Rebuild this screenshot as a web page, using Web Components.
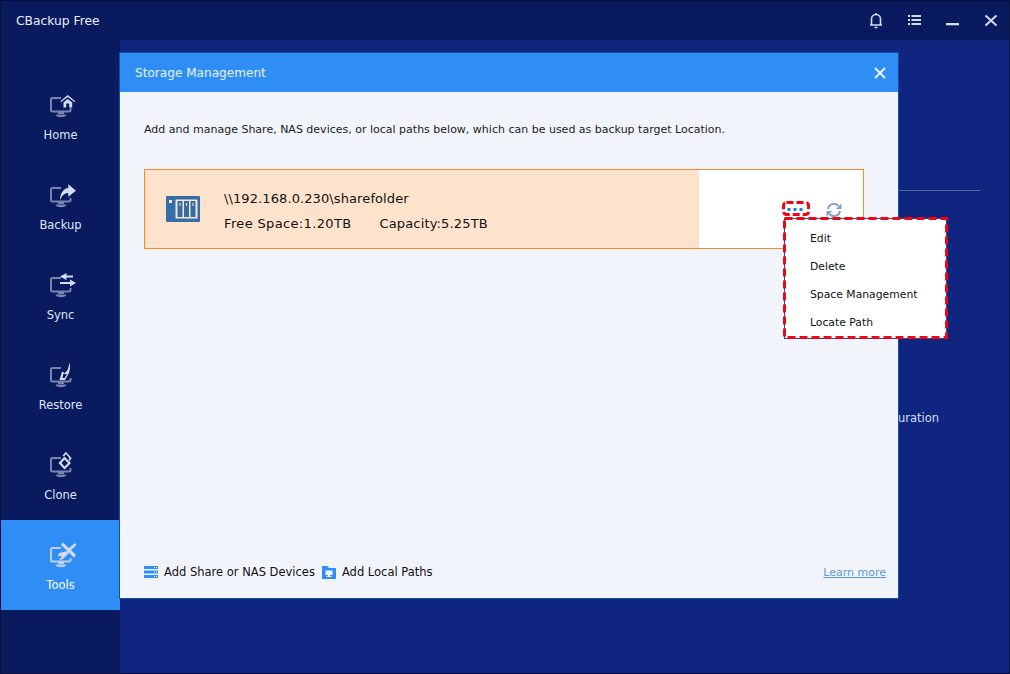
<!DOCTYPE html>
<html><head><meta charset="utf-8"><style>
html,body{margin:0;padding:0;background:#0a1a5e}
body{width:1010px;height:674px;overflow:hidden;font-family:"DejaVu Sans","Noto Sans",sans-serif;font-size:12px}
</style></head><body>
<cb-app></cb-app>
<script>
const monitor=`<g style="opacity:var(--mo,.55)"><path d="M12 7H3A1.500 1.500 0 0 0 2 8.500V19a1.500 1.500 0 0 0 1.500 1.500H20A1.500 1.500 0 0 0 21.500 19V17" fill="none" stroke="currentColor" stroke-width="2"/><path d="M9 21h6v2H9zM6.500 23.500h11a5 2.500 0 0 1-11 0z" fill="currentColor"/></g>`;
const glyphs={
home:`<path d="M18.700 4L26 10v1.500L18.700 6l-7 5.500V10zM14.500 11.500l4.200-3.500 4.500 3.500v5h-3v-4h-3v4h-2.700z" fill="currentColor"/>`,
backup:`<path d="M11 19C11 12 15 7 19.300 7V3.300L27 9.700l-7.700 6V12C15 12 13 15 11 19z" fill="currentColor"/>`,
sync:`<path d="M11 5.500L17.500 2v2.500H24v2h-6.500V9zM27 12l-6-3.500V11H11v2h10v2.500z" fill="currentColor"/>`,
restore:`<path d="M20.500 1.500C21.500 6 21 10 19.500 13L16 19h-5.500L13 10.500l3 1.500 2.500-3C19.500 7 20 4 20.500 1.500zM13.500 17h2l2.500-3.500-3.500-1z" fill="currentColor" fill-rule="evenodd"/>`,
clone:`<path d="M15.500 5.500L22 12l-6.500 6.500L9.500 12zM15.500 8.500L12.500 12l3 3.500L19 12z" fill="currentColor" fill-rule="evenodd"/><path d="M13.500 4.500L17 .7l5.700 6.600-2.200 2.700-1-1 1-1.700L17 3l-2 2.500z" fill="currentColor"/>`,
tools:`<path d="M12 4l2-2.500L27 14l-2 2.500zM26 2l1.500 2-6 5.500-2-2zM18 10l2 2-5 5a3.500 3.500 0 0 1-5 1l2.500-1.500-1-2-2.500 1a3.500 3.500 0 0 1 4-4z" fill="currentColor"/>`
};
function icon(n){return `<svg width="30" height="28" viewBox="0 0 30 28" style="color:#d4dcf2;display:block">${monitor}${glyphs[n]}</svg>`}
function shadow(el,html){el.attachShadow({mode:"open"}).innerHTML=html}

class CbNav extends HTMLElement{connectedCallback(){
 const n=this.getAttribute("icon");
 shadow(this,`<style>:host{display:flex;flex-direction:column;align-items:center;height:90px;box-sizing:border-box;padding-top:21px;color:#dfe6f8;font-size:11.500px}
 :host([active]){background:#2f8ef5;color:#fff;--mo:.85}
 .l{margin-top:8px;line-height:17px}
 svg{margin-left:7px}</style>${icon(n)}<div class="l"><slot></slot></div>`);
}}
customElements.define("cb-nav",CbNav);

class CbTitle extends HTMLElement{connectedCallback(){
 shadow(this,`<style>:host{display:flex;align-items:center;height:39px;background:#0a1a5e;color:#e8edfa;padding-left:15px;font-size:12.300px}
 .sp{flex:1}.b{display:flex;align-items:center}svg{display:block}</style>
 <span>CBackup Free</span><div class="sp"></div>
 <div class="b">
 <svg width="38" height="39" viewBox="0 0 38 39"><path d="M19 12v2M14.500 23.500V18a4.500 4.500 0 0 1 9 0v5.500M13 24h12M17.500 26.500h3" fill="none" stroke="#d4dcf2" stroke-width="1.600"/></svg>
 <svg width="38" height="39" viewBox="0 0 38 39"><path d="M13 14h2v2h-2zM13 18h2v2h-2zM13 22h2v2h-2zM16.500 14H26v2h-9.500zM16.500 18H26v2h-9.500zM16.500 22H26v2h-9.500z" fill="#d4dcf2"/></svg>
 <svg width="38" height="39" viewBox="0 0 38 39"><path d="M13 22h13v2.300H13z" fill="#d4dcf2"/></svg>
 <svg width="38" height="39" viewBox="0 0 38 39"><path d="M14.500 14.500l11 10M25.500 14.500l-11 10" stroke="#d4dcf2" stroke-width="2" fill="none"/></svg>
 </div>`);
}}
customElements.define("cb-title",CbTitle);

class CbMenu extends HTMLElement{connectedCallback(){
 shadow(this,`<style>:host{position:absolute;left:664px;top:126px;width:163px;height:121px;box-sizing:border-box;background:#fff;border:1px solid #22508f;display:block;padding:6px 0 0 25px;color:#111;font-size:10.800px;z-index:2}
 .m{height:28px;line-height:28px}
 svg{position:absolute;left:-2px;top:-2px}</style>
 <svg width="165" height="122"><rect x="1.500" y="1.500" width="162" height="119" fill="none" stroke="#f00514" stroke-width="3" stroke-dasharray="8 4"/></svg>
 <div class="m">Edit</div><div class="m">Delete</div><div class="m">Space Management</div><div class="m">Locate Path</div>`);
}}
customElements.define("cb-menu",CbMenu);

class CbStorage extends HTMLElement{connectedCallback(){
 shadow(this,`<style>:host{display:flex;height:80px;box-sizing:border-box;border:1px solid #fb8a2a;background:#fff;position:relative;color:#111}
 .f{width:554px;background:#fee3cc;display:flex;align-items:center;box-sizing:border-box;padding-left:21px}
 .t{margin-left:24px;font-size:13px;line-height:25px;padding-top:4px}
 .p{letter-spacing:.1px}
 .s1{letter-spacing:.35px}
 .s2{letter-spacing:.15px;margin-left:28px}
 .a{position:absolute;left:637px;top:31px;display:flex;align-items:flex-start}
 svg{display:block}</style>
 <div class="f">
 <svg width="34" height="26" viewBox="0 0 34 26"><rect width="34" height="26" rx="1" fill="#346ea8"/><rect x="9.500" y="3.500" width="22" height="19" fill="#fee3cc"/><rect x="11.500" y="5" width="5" height="16" fill="#346ea8"/><rect x="18" y="5" width="5" height="16" fill="#346ea8"/><rect x="24.500" y="5" width="5" height="16" fill="#346ea8"/><rect x="13.500" y="7" width="1" height="3" fill="#fee3cc"/><rect x="20" y="7" width="1" height="3" fill="#fee3cc"/><rect x="26.500" y="7" width="1" height="3" fill="#fee3cc"/><rect x="3" y="4" width="3" height="3" fill="#fee3cc"/></svg>
 <div class="t"><div class="p">\\\\192.168.0.230\\sharefolder</div><div><span class="s1">Free Space:1.20TB</span><span class="s2">Capacity:5.25TB</span></div></div>
 </div>
 <div class="a">
 <svg width="28" height="15" viewBox="0 0 28 15" style="margin-right:16px"><rect x="1.500" y="1.500" width="25" height="12" rx="3" fill="none" stroke="#f00514" stroke-width="3" stroke-dasharray="7 3"/><rect x="5.500" y="7" width="3" height="3" fill="#1f78e8"/><rect x="11.500" y="7" width="3" height="3" fill="#1f78e8"/><rect x="17.500" y="7" width="3" height="3" fill="#1f78e8"/></svg>
 <svg width="16" height="16" viewBox="0 0 16 16" style="margin-top:1px"><path d="M2 7a6 6 0 0 1 10.500-3M14 9a6 6 0 0 1-10.500 3" fill="none" stroke="#7f9fc5" stroke-width="2"/><path d="M15.500 1.500v5.500h-5.500zM.5 14.500V9h5.500z" fill="#7f9fc5"/></svg>
 </div>`);
}}
customElements.define("cb-storage",CbStorage);

class CbDialog extends HTMLElement{connectedCallback(){
 shadow(this,`<style>:host{position:absolute;left:-1px;top:12px;width:780px;height:547px;box-sizing:border-box;border:1px solid #13519c;background:#f1f5fb;display:flex;flex-direction:column;color:#111}
 .h{height:39px;background:#2f8ef5;color:#e9f2fe;display:flex;align-items:center;justify-content:space-between;padding:0 11px 0 15px;font-size:12.100px;flex:none}
 .b{flex:1;display:flex;flex-direction:column;padding:29px 12px 0 24px;position:relative;font-size:11.500px}
 .d{line-height:17px;margin-bottom:31px;color:#222;font-size:11px}
 cb-storage{width:720px}
 .g{flex:1}
 .f{display:flex;align-items:center;height:20px;margin-bottom:16px}
 .f svg{display:block;margin-right:6px}
 .f span{margin-right:7px}
 a{margin-left:auto;color:#5a9bd8;text-decoration:underline;font-size:11px}</style>
 <div class="h"><span>Storage Management</span><svg width="14" height="14" viewBox="0 0 14 14"><path d="M2 2l10 10M12 2L2 12" stroke="#e9f2fe" stroke-width="2"/></svg></div>
 <div class="b">
 <div class="d">Add and manage Share, NAS devices, or local paths below, which can be used as backup target Location.</div>
 <cb-storage></cb-storage>
 <cb-menu></cb-menu>
 <div class="g"></div>
 <div class="f">
 <svg width="14" height="12" viewBox="0 0 14 12"><path d="M0 0h14v3H0zM0 4.500h14v3H0zM0 9h14v3H0z" fill="#2f8ef5"/><path d="M10 1h1v1h-1zM12 1h1v1h-1zM10 5.500h1v1h-1zM12 5.500h1v1h-1zM10 10h1v1h-1zM12 10h1v1h-1z" fill="#fff"/></svg>
 <span>Add Share or NAS Devices</span>
 <svg width="14" height="13" viewBox="0 0 14 13"><path d="M0 0h5.500l1.500 2h7v11H0z" fill="#2f8ef5"/><path d="M3.500 4.500h7v4.500h-2.500v1h1.500v1h-5v-1H6V9H3.500z" fill="#fff"/></svg>
 <span>Add Local Paths</span>
 <a>Learn more</a>
 </div></div>`);
}}
customElements.define("cb-dialog",CbDialog);

class CbApp extends HTMLElement{connectedCallback(){
 shadow(this,`<style>:host{display:flex;flex-direction:column;width:1010px;height:674px;box-sizing:border-box;border:1px solid #06103c;background:#0a1a5e;overflow:hidden}
 .r{flex:1;display:flex;min-height:0}
 .s{width:119px;flex:none;padding-top:30px;box-sizing:border-box;background:#0a1a5e}
 .m{flex:1;background:#0f2580;position:relative;color:#d6def4;font-size:11.500px;display:flex;flex-direction:column;align-items:flex-end;padding:150px 29px 0 0}
 .line{width:82px;height:1px;background:#52659f}
 .u{margin-top:219px;width:82px;line-height:17px}</style>
 <cb-title></cb-title>
 <div class="r"><div class="s">
 <cb-nav icon="home">Home</cb-nav><cb-nav icon="backup">Backup</cb-nav><cb-nav icon="sync">Sync</cb-nav><cb-nav icon="restore">Restore</cb-nav><cb-nav icon="clone">Clone</cb-nav><cb-nav icon="tools" active>Tools</cb-nav>
 </div>
 <div class="m"><div class="line"></div><div class="u">uration</div>
 <cb-dialog></cb-dialog></div></div>`);
}}
customElements.define("cb-app",CbApp);
</script>
</body></html>
